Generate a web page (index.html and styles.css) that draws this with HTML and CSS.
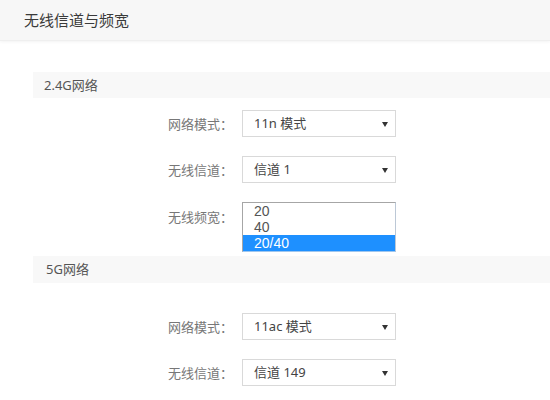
FILE: index.html
```html
<!DOCTYPE html>
<html lang="zh-CN">
<head>
    <meta charset="UTF-8">
    <meta name="viewport" content="width=device-width, initial-scale=1.0">
    <title>无线信道与频宽</title>
    <link rel="stylesheet" href="styles.css">
</head>
<body>
    <div class="page-head">无线信道与频宽</div>

    <div class="content">
        <div class="band-title">2.4G网络</div>

        <div class="form-row">
            <label class="form-label">网络模式：</label>
            <div class="select-box">11n 模式<span class="arrow"></span></div>
        </div>
        <div class="form-row">
            <label class="form-label">无线信道：</label>
            <div class="select-box">信道 1<span class="arrow"></span></div>
        </div>
        <div class="form-row form-row-list">
            <label class="form-label">无线频宽：</label>
            <ul class="list-box">
                <li>20</li>
                <li>40</li>
                <li class="selected">20/40</li>
            </ul>
        </div>

        <div class="band-title band-5g">5G网络</div>

        <div class="form-row form-row-first">
            <label class="form-label">网络模式：</label>
            <div class="select-box">11ac 模式<span class="arrow"></span></div>
        </div>
        <div class="form-row">
            <label class="form-label">无线信道：</label>
            <div class="select-box">信道 149<span class="arrow"></span></div>
        </div>
    </div>
</body>
</html>
```

FILE: styles.css
```css
body {
    font-family: "Noto Sans", "Noto Sans CJK SC", sans-serif;
    margin: 0;
    padding: 0;
    background-color: #fff;
    color: #333;
    overflow: hidden;
}

.page-head {
    height: 40px;
    line-height: 40px;
    padding-left: 24px;
    font-size: 15px;
    color: #3a3a3a;
    background-color: #f7f7f7;
    border-bottom: 1px solid #efefef;
    box-shadow: 0 1px 3px rgba(0, 0, 0, 0.05);
}

.content {
    padding-left: 33px;
}

.band-title {
    margin-top: 31px;
    height: 26px;
    line-height: 26px;
    padding-left: 11px;
    font-size: 13px;
    color: #555;
    background-color: #f8f8f8;
}

.band-5g {
    margin-top: 4px;
    height: 27px;
    line-height: 27px;
    padding-left: 13px;
}

.form-row {
    display: flex;
    align-items: center;
    gap: 9px;
    margin-top: 19px;
}

.band-title + .form-row {
    margin-top: 12px;
}

.form-row-list {
    align-items: flex-start;
}

.form-row-list .form-label {
    line-height: 30px;
}

.band-5g + .form-row-first {
    margin-top: 30px;
}

.form-label {
    width: 200px;
    text-align: right;
    font-size: 13px;
    color: #777;
}

.select-box {
    position: relative;
    box-sizing: border-box;
    width: 154px;
    height: 27px;
    line-height: 25px;
    padding-left: 11px;
    font-size: 13px;
    color: #444;
    border: 1px solid #d9d9d9;
    background-color: #fff;
}

.arrow {
    position: absolute;
    right: 7px;
    top: 11px;
    width: 0;
    height: 0;
    border-left: 3px solid transparent;
    border-right: 3px solid transparent;
    border-top: 5px solid #333;
}

.list-box {
    list-style-type: none;
    margin: 0;
    padding: 0;
    width: 154px;
    box-sizing: border-box;
    border: 1px solid #a6a6a6;
    border-right-color: #bcc8d6;
    border-bottom-color: #9fc6ee;
    font-family: "Liberation Sans", Arial, sans-serif;
    font-size: 14px;
    color: #555;
}

.list-box li {
    height: 16px;
    line-height: 16px;
    padding-left: 11px;
}

.list-box .selected {
    background-color: #1e90ff;
    color: #fff;
}
```
